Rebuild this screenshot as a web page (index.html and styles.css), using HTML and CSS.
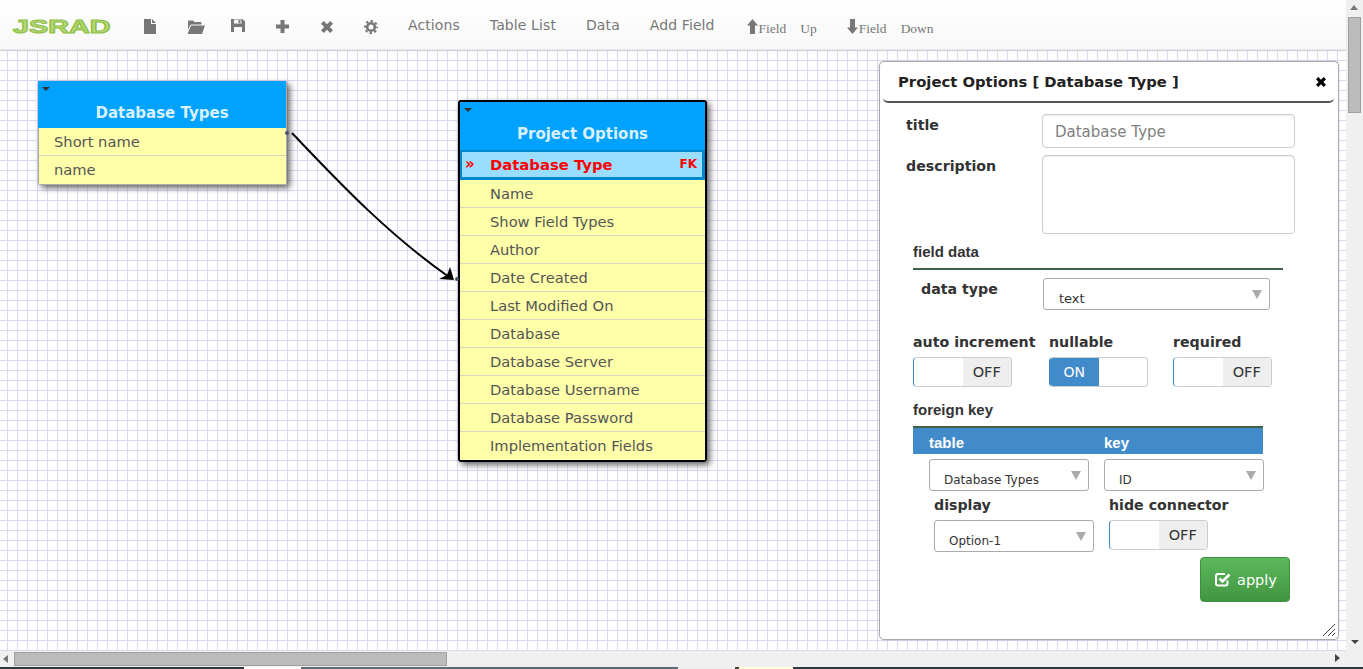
FILE: index.html
```html
<!DOCTYPE html>
<html lang="en">
<head>
    <meta charset="UTF-8">
    <title>JSRAD</title>
    <link rel="stylesheet" href="styles.css">
</head>
<body>
    <div class="main">
        <div class="viewport">
            <header class="navbar">
                <a class="logo"><span>JSRAD</span></a>
                <a class="nav-icon"><svg width="12" height="15" viewBox="0 0 12 15"><path d="M0 0H7V5H12V15H0Z M8 0L12 4H8Z"/></svg></a>
                <a class="nav-icon icon-open"><svg width="18" height="14" viewBox="0 0 18 14"><path d="M1 6V1.5Q1 .5 2 .5H6L7.5 2H13.5Q14.5 2 14.5 3V4.5H4.5Q3.3 4.5 2.8 5.7L1 10Z M4 5.5H18L15 14H0.5Z"/></svg></a>
                <a class="nav-icon icon-save"><svg width="14" height="13" viewBox="0 0 14 13"><path fill-rule="evenodd" d="M0 0H11.5L14 2.5V13H0Z M3 .5V4.5H10.5V.5Z M7.5 1H9.5V4H7.5Z M3 8V13H11V8Z"/></svg></a>
                <a class="nav-icon"><svg width="13" height="13" viewBox="0 0 13 13"><path d="M4.5 0H8.5V4.5H13V8.5H8.5V13H4.5V8.5H0V4.5H4.5Z"/></svg></a>
                <a class="nav-icon icon-close"><svg width="12" height="12" viewBox="0 0 12 12"><path d="M2.8 0L6 3.2L9.2 0L12 2.8L8.8 6L12 9.2L9.2 12L6 8.8L2.8 12L0 9.2L3.2 6L0 2.8Z"/></svg></a>
                <a class="nav-icon"><svg width="14" height="14" viewBox="0 0 14 14"><circle cx="7" cy="7" r="3.8" fill="none" stroke="#777" stroke-width="2.6"/><circle cx="7" cy="7" r="6" fill="none" stroke="#777" stroke-width="2" stroke-dasharray="2.4 2.31" stroke-dashoffset="1.2"/></svg></a>
                <a class="nav-link first">Actions</a>
                <a class="nav-link">Table List</a>
                <a class="nav-link">Data</a>
                <a class="nav-link">Add Field</a>
                <a class="nav-move up"><svg width="11" height="15" viewBox="0 0 11 15"><path d="M5.5 0L11 6.5H8V15H3V6.5H0Z"/></svg><span class="move-field">Field</span><span>Up</span></a>
                <a class="nav-move"><svg width="11" height="15" viewBox="0 0 11 15"><path d="M5.5 15L11 8.5H8V0H3V8.5H0Z"/></svg><span class="move-field">Field</span><span>Down</span></a>
            </header>

            <div class="canvas">
                <div class="table table-types">
                    <div class="table-head">
                        <i class="caret"></i>
                        <div class="table-name">Database Types</div>
                    </div>
                    <div class="field">Short name</div>
                    <div class="field">name</div>
                </div>

                <div class="table table-options">
                    <div class="table-head">
                        <i class="caret"></i>
                        <div class="table-name">Project Options</div>
                    </div>
                    <div class="field selected"><b class="mark">»</b><span>Database Type</span><b class="fk">FK</b></div>
                    <div class="field">Name</div>
                    <div class="field">Show Field Types</div>
                    <div class="field">Author</div>
                    <div class="field">Date Created</div>
                    <div class="field">Last Modified On</div>
                    <div class="field">Database</div>
                    <div class="field">Database Server</div>
                    <div class="field">Database Username</div>
                    <div class="field">Database Password</div>
                    <div class="field">Implementation Fields</div>
                </div>

                <svg class="connector" width="1346" height="601" viewBox="0 50 1346 601">
                    <path d="M292 133C335 178 385 232 449 277" fill="none" stroke="#000" stroke-width="2"/>
                    <path d="M454 280L439 279L447 275L450 267Z"/>
                    <circle cx="287" cy="133" r="2" fill="#456"/>
                    <circle cx="457" cy="279" r="2" fill="#456"/>
                </svg>

                <div class="panel">
                    <div class="panel-head">
                        <span>Project Options [ Database Type ]</span>
                        <svg width="10" height="10" viewBox="0 0 12 12"><path d="M2.8 0L6 3.2L9.2 0L12 2.8L8.8 6L12 9.2L9.2 12L6 8.8L2.8 12L0 9.2L3.2 6L0 2.8Z"/></svg>
                    </div>
                    <div class="panel-body">
                        <div class="row">
                            <label class="lbl lbl-wide">title</label>
                            <input class="text-input" type="text" placeholder="Database Type">
                        </div>
                        <div class="row row-desc">
                            <label class="lbl lbl-wide">description</label>
                            <textarea class="text-input text-area"></textarea>
                        </div>

                        <div class="section">
                            <h4 class="section-title ruled">field data</h4>
                            <div class="row row-type">
                                <label class="lbl lbl-type">data type</label>
                                <div class="select select-type">text</div>
                            </div>
                            <div class="flags">
                                <div>
                                    <label class="lbl">auto increment</label>
                                    <div class="toggle"><span class="blank"></span><span class="off">OFF</span></div>
                                </div>
                                <div>
                                    <label class="lbl">nullable</label>
                                    <div class="toggle is-on"><span class="on">ON</span><span class="blank"></span></div>
                                </div>
                                <div>
                                    <label class="lbl">required</label>
                                    <div class="toggle"><span class="blank"></span><span class="off">OFF</span></div>
                                </div>
                            </div>

                            <h4 class="section-title fk-title">foreign key</h4>
                            <div class="fk-head"><span>table</span><span>key</span></div>
                            <div class="fk-selects">
                                <div class="select">Database Types</div>
                                <div class="select">ID</div>
                            </div>
                            <div class="fk-extra">
                                <div>
                                    <label class="lbl">display</label>
                                    <div class="select">Option-1</div>
                                </div>
                                <div>
                                    <label class="lbl">hide connector</label>
                                    <div class="toggle"><span class="blank"></span><span class="off">OFF</span></div>
                                </div>
                            </div>
                            <button class="btn-apply"><svg width="16" height="15" viewBox="0 0 16 15"><path d="M12.5 8.5V11.5Q12.5 13.5 10.5 13.5H3Q1 13.5 1 11.5V4Q1 2 3 2H10" fill="none" stroke="#fff" stroke-width="2"/><path d="M4.5 6.5L7.5 9.5L14.5 2.5" fill="none" stroke="#fff" stroke-width="2.6"/></svg>apply</button>
                        </div>
                    </div>
                    <svg class="resizer" width="12" height="12" viewBox="0 0 12 12"><path d="M0 12L12 0M5 12L12 5M9 12L12 9" stroke="#444" fill="none"/></svg>
                </div>
            </div>
        </div>
        <div class="vscroll">
            <i class="arrow arrow-up"></i>
            <div class="vthumb"></div>
            <i class="arrow arrow-down"></i>
        </div>
    </div>
    <div class="hscroll">
        <i class="arrow arrow-left"></i>
        <div class="hthumb"></div>
        <i class="arrow arrow-right"></i>
    </div>
    <div class="taskstrip"></div>
</body>
</html>
```

FILE: styles.css
```css
html, body {
    margin: 0;
    height: 669px;
    overflow: hidden;
}
body {
    font-family: "DejaVu Sans", Verdana, sans-serif;
    color: #333;
    display: flex;
    flex-direction: column;
}
.main {
    display: flex;
    height: 651px;
}
.viewport {
    width: 1346px;
    display: flex;
    flex-direction: column;
}

/* top bar */
.navbar {
    height: 50px;
    box-sizing: border-box;
    flex: none;
    display: flex;
    align-items: center;
    background: linear-gradient(to bottom, #fff, #f8f8f8);
    border-bottom: 1px solid #e7e7e7;
    box-shadow: 0 1px 2px rgba(0, 0, 0, 0.06);
    position: relative;
    z-index: 2;
}
.logo {
    width: 98px;
    height: 14px;
    margin: 0 17px 0 13px;
    display: block;
    overflow: visible;
}
.logo span {
    display: inline-block;
    font: bold 18px/14px "Liberation Sans", Arial, sans-serif;
    color: #b4d978;
    -webkit-text-stroke: 1px #8fbf45;
    transform: scaleX(1.6);
    transform-origin: left center;
}
.nav-icon {
    width: 24px;
    height: 16px;
    margin: 4px 10px 0;
    display: flex;
    justify-content: center;
    align-items: center;
}
.nav-icon svg, .nav-move svg {
    fill: #777;
}
.icon-open {
    margin-left: 12px;
    margin-right: 8px;
}
.icon-save {
    margin-top: 1px;
}
.icon-close {
    margin-left: 11px;
}
.nav-link {
    color: #777;
    font-size: 14px;
    letter-spacing: 0.1px;
    margin-right: 30px;
    margin-top: 1px;
}
.nav-link.first {
    margin-left: 15px;
}
.nav-move {
    display: flex;
    align-items: center;
    color: #777;
    font: 13.5px "Liberation Serif", "Times New Roman", serif;
    margin-top: 8px;
}
.nav-move.up {
    margin-left: 2px;
    margin-right: 30px;
}
.nav-move svg {
    margin: -4px 1px 0 0;
}
.move-field {
    margin-right: 14px;
}

/* drawing area */
.canvas {
    flex: 1;
    position: relative;
    background-color: #fff;
    background-image:
        linear-gradient(to right, #dcd7f3 1px, transparent 1px),
        linear-gradient(to bottom, #dcd7f3 1px, transparent 1px);
    background-size: 10px 10px;
    background-position: 7px 0;
}
.table {
    position: absolute;
    width: 249px;
    box-sizing: border-box;
    box-shadow: 3px 3px 6px #666;
    border-radius: 2px;
}
.table-types {
    left: 38px;
    top: 31px;
    border: 1px solid #aaa;
    border-top: 0;
}
.table-types .table-head {
    margin-left: -1px;
}
.table-types .table-name {
    bottom: 5px;
}
.table-options {
    left: 458px;
    top: 50px;
    border: 2px solid #000;
    border-radius: 3px;
}
.table-head {
    background: #00a2ff;
    height: 47px;
    position: relative;
}
.table-options .table-head {
    height: 48px;
}
.caret {
    position: absolute;
    left: 4px;
    top: 6px;
    border: 4px solid transparent;
    border-top-color: #333;
    border-bottom: 0;
}
.table-name {
    position: absolute;
    left: 0;
    right: 0;
    bottom: 6px;
    text-align: center;
    color: #d8f0ff;
    font-weight: bold;
    font-size: 15px;
    line-height: 20px;
}
.field {
    height: 28px;
    box-sizing: border-box;
    background: #ffffaa;
    border-bottom: 1px solid #d6d6c0;
    color: #555;
    font-size: 14.7px;
    line-height: 27px;
    padding-left: 15px;
}
.field:last-child {
    border-bottom: 0;
}
.table-options .field {
    padding-left: 30px;
}
.table-options .field.selected {
    height: 30px;
    background: #99ddff;
    border: 3px solid #0088cc;
    border-width: 2px 3px 3px 2px;
    color: #f00;
    font-weight: bold;
    font-size: 14.8px;
    display: flex;
    padding: 0 5px 0 3px;
    line-height: 25px;
}
.mark {
    width: 25px;
    font-size: 15px;
}
.fk {
    margin-left: auto;
    font-size: 12px;
}
.connector {
    position: absolute;
    left: 0;
    top: 0;
    pointer-events: none;
}

/* options window */
.panel {
    position: absolute;
    left: 879px;
    top: 11px;
    width: 460px;
    height: 579px;
    box-sizing: border-box;
    background: #fff;
    border: 1px solid #aaa;
    border-radius: 5px;
    padding: 3px;
    box-shadow: 0 0 2px rgba(0, 0, 0, 0.2);
}
.panel-head {
    height: 38px;
    box-sizing: border-box;
    margin: 0 1px 0 0;
    padding: 0 8px 3px 15px;
    border-bottom: 2px solid #555;
    border-radius: 0 0 5px 5px;
    display: flex;
    justify-content: space-between;
    align-items: center;
    font-weight: bold;
    font-size: 14.8px;
    color: #222;
}
.panel-body {
    padding: 11px 0 0 23px;
}
.row {
    display: flex;
}
.row-desc {
    margin-top: 7px;
}
.lbl {
    display: block;
    font-weight: bold;
    font-size: 14.2px;
    line-height: 20px;
    color: #333;
    white-space: nowrap;
}
.lbl-wide {
    width: 136px;
    padding-top: 1px;
}
.text-input {
    width: 253px;
    height: 34px;
    box-sizing: border-box;
    margin: 0;
    border: 1px solid #ccc;
    border-radius: 4px;
    padding: 2px 12px 0;
    font: 15px "DejaVu Sans", Verdana, sans-serif;
    box-shadow: inset 0 1px 1px rgba(0, 0, 0, 0.075);
    display: block;
}
.text-input::placeholder {
    color: #808080;
}
.text-area {
    height: 79px;
    resize: none;
}
.section {
    margin: 8px 0 0 7px;
}
.section-title {
    margin: 0;
    font: bold 15px/20px "Liberation Sans", Arial, sans-serif;
    color: #333;
}
.ruled {
    width: 370px;
    padding-bottom: 6px;
    border-bottom: 2px solid #3f5f47;
}
.row-type {
    margin: 8px 0 0 8px;
}
.lbl-type {
    width: 122px;
    padding-top: 1px;
}
.select {
    width: 160px;
    height: 32px;
    box-sizing: border-box;
    border: 1px solid #aaa;
    border-radius: 3px;
    padding: 10px 0 0 14px;
    font-size: 12px;
    line-height: 20px;
    color: #333;
    position: relative;
}
.select::after {
    content: "";
    position: absolute;
    right: 7px;
    top: 11px;
    border: 5px solid transparent;
    border-top: 9px solid #aaa;
    border-bottom: 0;
}
.select-type {
    width: 227px;
    font-size: 13px;
    padding-left: 15px;
}
.flags {
    margin-top: 22px;
    display: grid;
    grid-template-columns: 136px 124px 1fr;
}
.flags .lbl {
    margin-bottom: 5px;
}
.toggle {
    width: 99px;
    height: 30px;
    box-sizing: border-box;
    border: 1px solid #ccc;
    border-left-color: #428bca;
    border-radius: 4px;
    display: flex;
    overflow: hidden;
    font-size: 14px;
    line-height: 28px;
    text-align: center;
}
.toggle span {
    flex: 1;
}
.toggle .off {
    background: #eee;
    color: #333;
    font-size: 14.5px;
}
.toggle .on {
    background: #428bca;
    color: #fff;
}
.fk-title {
    margin-top: 13px;
}
.fk-head {
    width: 350px;
    height: 28px;
    box-sizing: border-box;
    margin-top: 6px;
    border-top: 2px solid #3f5f47;
    background: #428bca;
    display: grid;
    grid-template-columns: 175px 1fr;
    padding-left: 16px;
    font: bold 15px/30px "Liberation Sans", Arial, sans-serif;
    color: #fff;
}
.fk-selects {
    margin: 5px 0 0 16px;
    display: grid;
    grid-template-columns: 160px 160px;
    column-gap: 15px;
}
.fk-extra {
    margin: 4px 0 0 21px;
    display: grid;
    grid-template-columns: 160px 160px;
    column-gap: 15px;
}
.fk-extra .lbl {
    margin-bottom: 5px;
}
.btn-apply {
    display: flex;
    align-items: center;
    gap: 6px;
    width: 90px;
    height: 45px;
    box-sizing: border-box;
    margin: 5px 0 0 287px;
    padding: 0 0 0 14px;
    background: linear-gradient(to bottom, #5cb85c, #419641);
    border: 1px solid #3e8f3e;
    border-radius: 4px;
    color: #fff;
    font: 14.5px "DejaVu Sans", Verdana, sans-serif;
}
.resizer {
    position: absolute;
    right: 3px;
    bottom: 3px;
}

/* scrollbars */
.vscroll {
    width: 17px;
    background: #f0f0f0;
    position: relative;
}
.vthumb {
    position: absolute;
    left: 2px;
    top: 17px;
    width: 13px;
    height: 96px;
    box-sizing: border-box;
    background: #bbb;
    border: 1px solid #a0a0a0;
}
.hscroll {
    height: 16px;
    flex: none;
    background: #f0f0f0;
    position: relative;
}
.hthumb {
    position: absolute;
    left: 14px;
    top: 1px;
    width: 433px;
    height: 14px;
    box-sizing: border-box;
    background: #bbb;
    border: 1px solid #a0a0a0;
}
.arrow {
    position: absolute;
    width: 0;
    height: 0;
    border: 4px solid transparent;
}
.arrow-up {
    left: 4px;
    top: 5px;
    border-top: 0;
    border-bottom: 5px solid #777;
}
.arrow-down {
    left: 5px;
    bottom: 7px;
    border-bottom: 0;
    border-top: 4px solid #444;
}
.arrow-left {
    left: 3px;
    top: 4px;
    border-left: 0;
    border-right: 5px solid #777;
}
.arrow-right {
    left: 1335px;
    top: 3px;
    border-right: 0;
    border-left: 5px solid #444;
}
.taskstrip {
    height: 2px;
    flex: none;
    background:
        linear-gradient(to right,
            #2c3a44 0, #2c3a44 244px, #fff 244px, #fff 301px, #5a6c76 301px,
            #5a6c76 678px, #eee 678px, #eee 735px, #444 735px,
            #444 739px, #ffd 739px, #ffd 793px, #2c3a44 793px);
}
```
